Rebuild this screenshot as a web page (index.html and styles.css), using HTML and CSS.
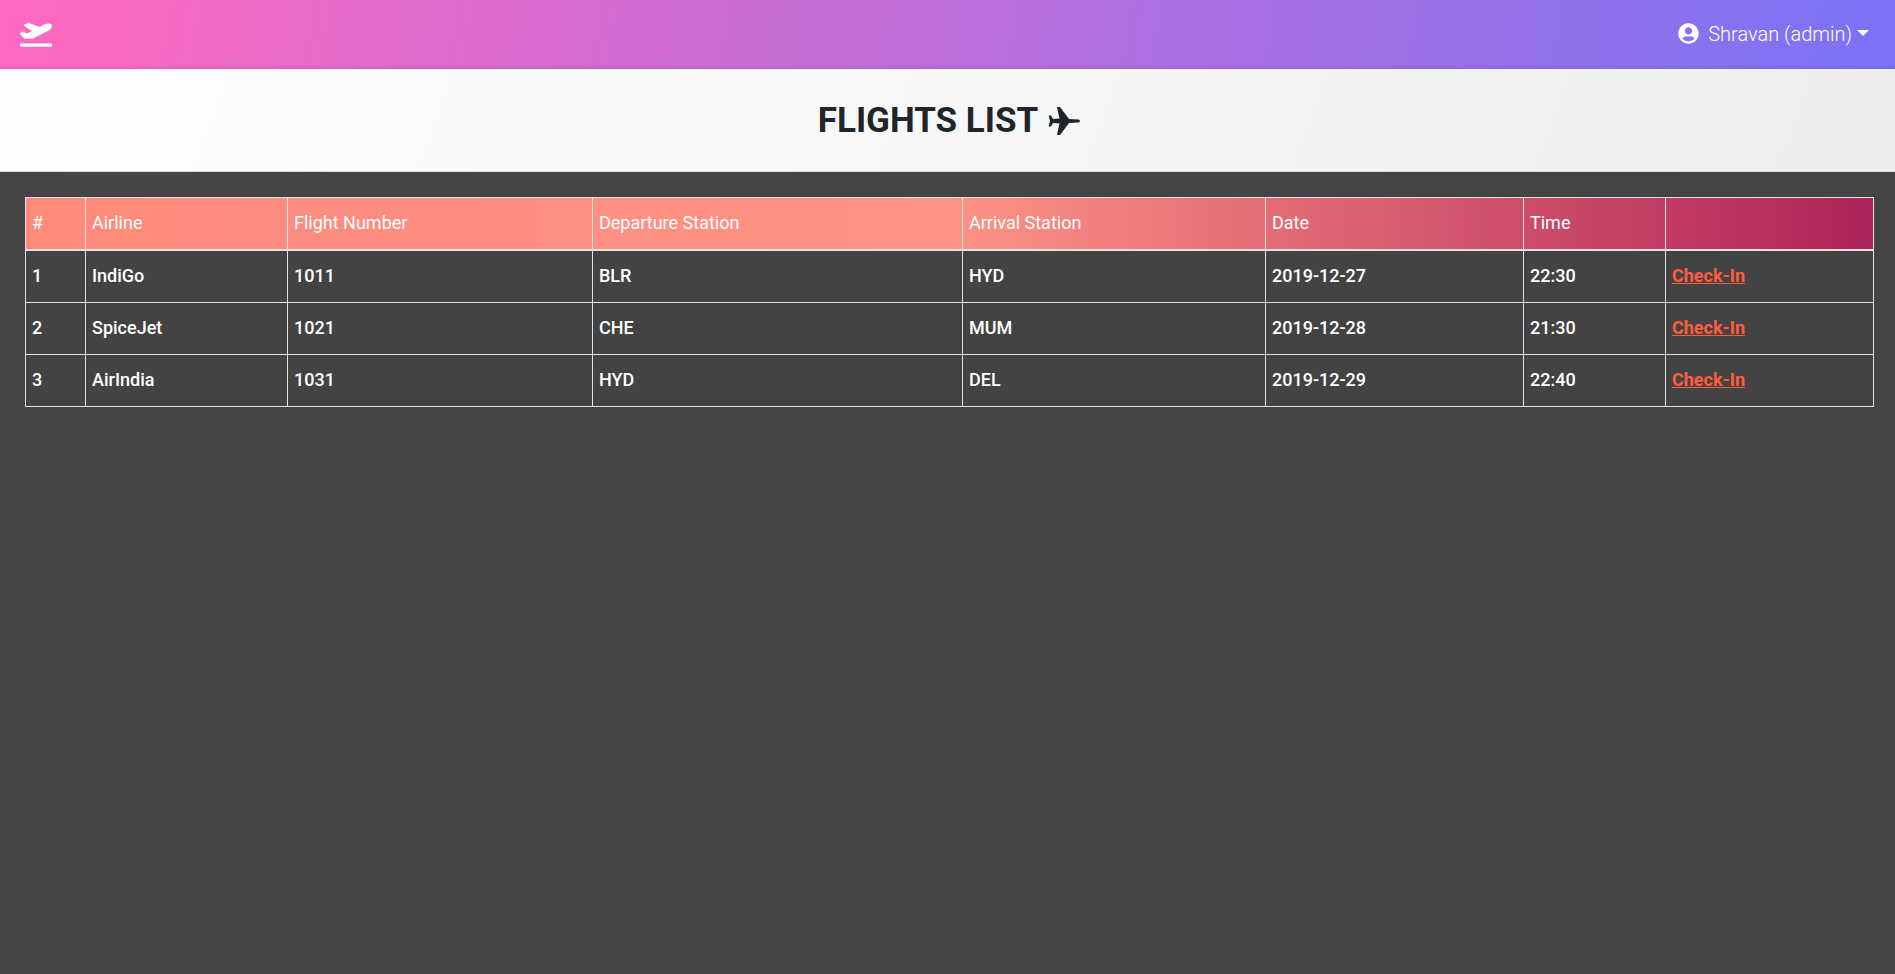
FILE: index.html
```html
<!DOCTYPE html>
<html lang="en">
<head>
<meta charset="utf-8">
<title>Flights List</title>
<link rel="stylesheet" href="styles.css">
</head>
<body>
<nav class="navbar">
  <a class="brand" href="#" aria-label="Home">
    <svg class="brand-icon" viewBox="0 0 640 512" aria-hidden="true"><path fill="currentColor" d="M624 448H16c-8.840 0-16 7.160-16 16v32c0 8.840 7.160 16 16 16h608c8.840 0 16-7.160 16-16v-32c0-8.840-7.160-16-16-16zM80.550 341.270c6.280 6.840 15.100 10.720 24.330 10.710l130.540-.18a65.620 65.620 0 0 0 29.640-7.120l290.960-147.650c26.740-13.570 50.710-32.940 67.020-58.310 18.310-28.480 20.300-49.090 13.070-63.650-7.210-14.570-24.740-25.270-58.250-27.450-29.850-1.940-59.540 5.920-86.280 19.480l-98.510 49.990-218.710-82.060a17.799 17.799 0 0 0-18-1.110L90.620 67.290c-10.670 5.410-13.250 19.650-5.170 28.530l156.220 98.100-103.210 52.380-72.350-36.470a17.804 17.804 0 0 0-16.120.090L9.150 230.810c-10.440 5.300-13.190 19.120-5.570 28.080l76.970 82.380z"/></svg>
  </a>
  <a class="user-menu" href="#">
    <svg class="user-icon" viewBox="0 0 496 512" aria-hidden="true"><path fill="currentColor" d="M248 8C111 8 0 119 0 256s111 248 248 248 248-111 248-248S385 8 248 8zm0 96c48.600 0 88 39.400 88 88s-39.400 88-88 88-88-39.400-88-88 39.400-88 88-88zm0 344c-58.700 0-111.300-26.600-146.500-68.200 18.800-35.400 55.600-59.800 98.500-59.800 2.400 0 4.800.4 7.100 1.100 13 4.200 26.600 6.900 40.900 6.900 14.300 0 28-2.700 40.900-6.900 2.300-.7 4.700-1.100 7.100-1.100 42.900 0 79.700 24.400 98.500 59.800C359.300 421.400 306.700 448 248 448z"/></svg>
    <span>Shravan (admin)</span>
    <span class="caret"></span>
  </a>
</nav>
<header class="title-band">
  <h1>FLIGHTS LIST<svg class="title-plane" viewBox="0 0 32 28" aria-hidden="true"><path fill="currentColor" d="M32 14c0 .8-1 1.500-2 1.500L21 16 12 28H9l2.500-11.500-6.500-.5-2 3.500H.6L2 14 .6 8.500H3l2 3.500 6.500-.5L9 0h3l9 12 9 .5c1 0 2 .7 2 1.500z"/></svg></h1>
</header>
<main class="content">
  <table class="flights">
    <colgroup>
      <col class="c1"><col class="c2"><col class="c3"><col class="c4"><col class="c5"><col class="c6"><col class="c7"><col class="c8">
    </colgroup>
    <thead>
      <tr><th>#</th><th>Airline</th><th>Flight Number</th><th>Departure Station</th><th>Arrival Station</th><th>Date</th><th>Time</th><th></th></tr>
    </thead>
    <tbody>
      <tr><td>1</td><td>IndiGo</td><td>1011</td><td>BLR</td><td>HYD</td><td>2019-12-27</td><td>22:30</td><td><a href="#">Check-In</a></td></tr>
      <tr><td>2</td><td>SpiceJet</td><td>1021</td><td>CHE</td><td>MUM</td><td>2019-12-28</td><td>21:30</td><td><a href="#">Check-In</a></td></tr>
      <tr><td>3</td><td>AirIndia</td><td>1031</td><td>HYD</td><td>DEL</td><td>2019-12-29</td><td>22:40</td><td><a href="#">Check-In</a></td></tr>
    </tbody>
  </table>
</main>
</body>
</html>
```

FILE: styles.css
```css
* { box-sizing: border-box; }
html, body { height: 100%; }
body {
  margin: 0;
  display: flex;
  flex-direction: column;
  background: #444444;
  font-family: Roboto, "Liberation Sans", sans-serif;
  font-size: 16px;
  line-height: 1.5;
  color: #fff;
}
.navbar {
  height: 69px;
  flex: none;
  display: flex;
  align-items: center;
  justify-content: space-between;
  padding: 0 26px 2px 20px;
  background: linear-gradient(100deg, #ff69c0, #7a73f5);
  box-shadow: inset 0 -4px 4px -3px rgba(90, 40, 120, 0.2);
}
.brand { display: flex; color: #fff; }
.brand-icon { width: 32px; height: 26px; display: block; }
.user-menu {
  display: flex;
  align-items: center;
  gap: 9px;
  color: #fff;
  font-size: 20px;
  font-weight: 300;
  text-decoration: none;
}
.user-icon { width: 21px; height: 21px; display: block; }
.caret {
  width: 0;
  height: 0;
  margin: -2px 0 0 -4px;
  border-top: 6px solid #fff;
  border-left: 6px solid transparent;
  border-right: 6px solid transparent;
}
.title-band {
  height: 103px;
  flex: none;
  display: flex;
  align-items: center;
  justify-content: center;
  padding-top: 2px;
  background: linear-gradient(110deg, #ffffff, #eceeef);
  border-bottom: 1px solid #dee2e6;
}
h1 {
  margin: 0;
  display: flex;
  align-items: center;
  font-size: 35px;
  font-weight: 700;
  color: #212529;
  line-height: 1.2;
}
.title-plane {
  width: 32px;
  height: 28px;
  margin: -1px -3px 0 10px;
  display: block;
}
.content { padding: 25px 21px 0 25px; }
.flights {
  width: 1848px;
  table-layout: fixed;
  border-collapse: collapse;
  border: 1px solid #dee2e6;
}
.c1 { width: 60px; }
.c2 { width: 202px; }
.c3 { width: 305px; }
.c4 { width: 370px; }
.c5 { width: 303px; }
.c6 { width: 258px; }
.c7 { width: 142px; }
.c8 { width: 208px; }
.flights th, .flights td {
  border: 1px solid #dee2e6;
  padding: 11px 6px 13px;
  text-align: left;
  font-size: 18px;
}
.flights th { font-weight: 400; border-bottom-width: 2px; }
.flights td { font-weight: 500; background: #434343; }
.flights thead tr {
  background: linear-gradient(to right, #ff8a7c 0%, #ff9385 50%, #ad2359 100%);
}
.flights a { color: #ff5c40; font-weight: 700; text-decoration: underline; }
```
